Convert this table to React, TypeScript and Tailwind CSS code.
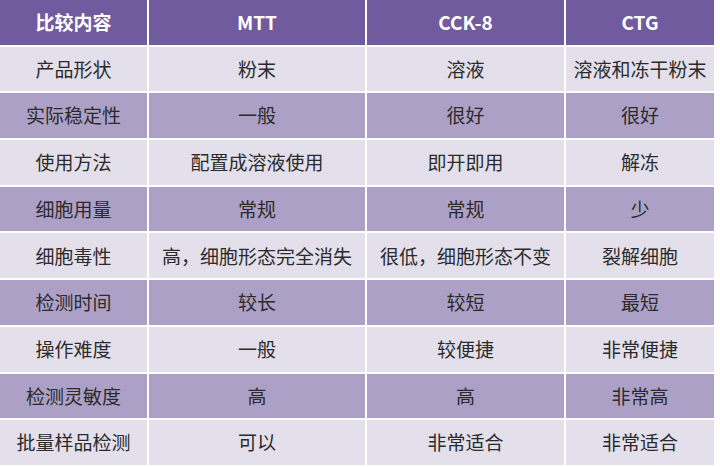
const header = ["比较内容", "MTT", "CCK-8", "CTG"];

const rows = [
  ["产品形状", "粉末", "溶液", "溶液和冻干粉末"],
  ["实际稳定性", "一般", "很好", "很好"],
  ["使用方法", "配置成溶液使用", "即开即用", "解冻"],
  ["细胞用量", "常规", "常规", "少"],
  ["细胞毒性", "高，细胞形态完全消失", "很低，细胞形态不变", "裂解细胞"],
  ["检测时间", "较长", "较短", "最短"],
  ["操作难度", "一般", "较便捷", "非常便捷"],
  ["检测灵敏度", "高", "高", "非常高"],
  ["批量样品检测", "可以", "非常适合", "非常适合"],
];

export default function App() {
  return (
    <div
      className="w-[720px] h-[467px] bg-white overflow-hidden"
      style={{ fontFamily: '"Noto Sans CJK SC", "Noto Sans", sans-serif' }}
    >
      <div className="grid grid-cols-[147px_216px_197px_148px] auto-rows-[44.7px] gap-[2px] w-[714px]">
        {header.map((h) => (
          <div
            key={h}
            className="bg-[#6f5b9d] text-white font-bold text-[19px] flex items-center justify-center"
          >
            {h}
          </div>
        ))}
        {rows.map((row, i) =>
          row.map((cell, j) => (
            <div
              key={`${i}-${j}`}
              className={`${
                i % 2 === 0 ? "bg-[#e3e0eb]" : "bg-[#ada0c7]"
              } text-[#2b2b2b] text-[19px] flex items-center justify-center whitespace-nowrap`}
            >
              {cell}
            </div>
          ))
        )}
      </div>
    </div>
  );
}
